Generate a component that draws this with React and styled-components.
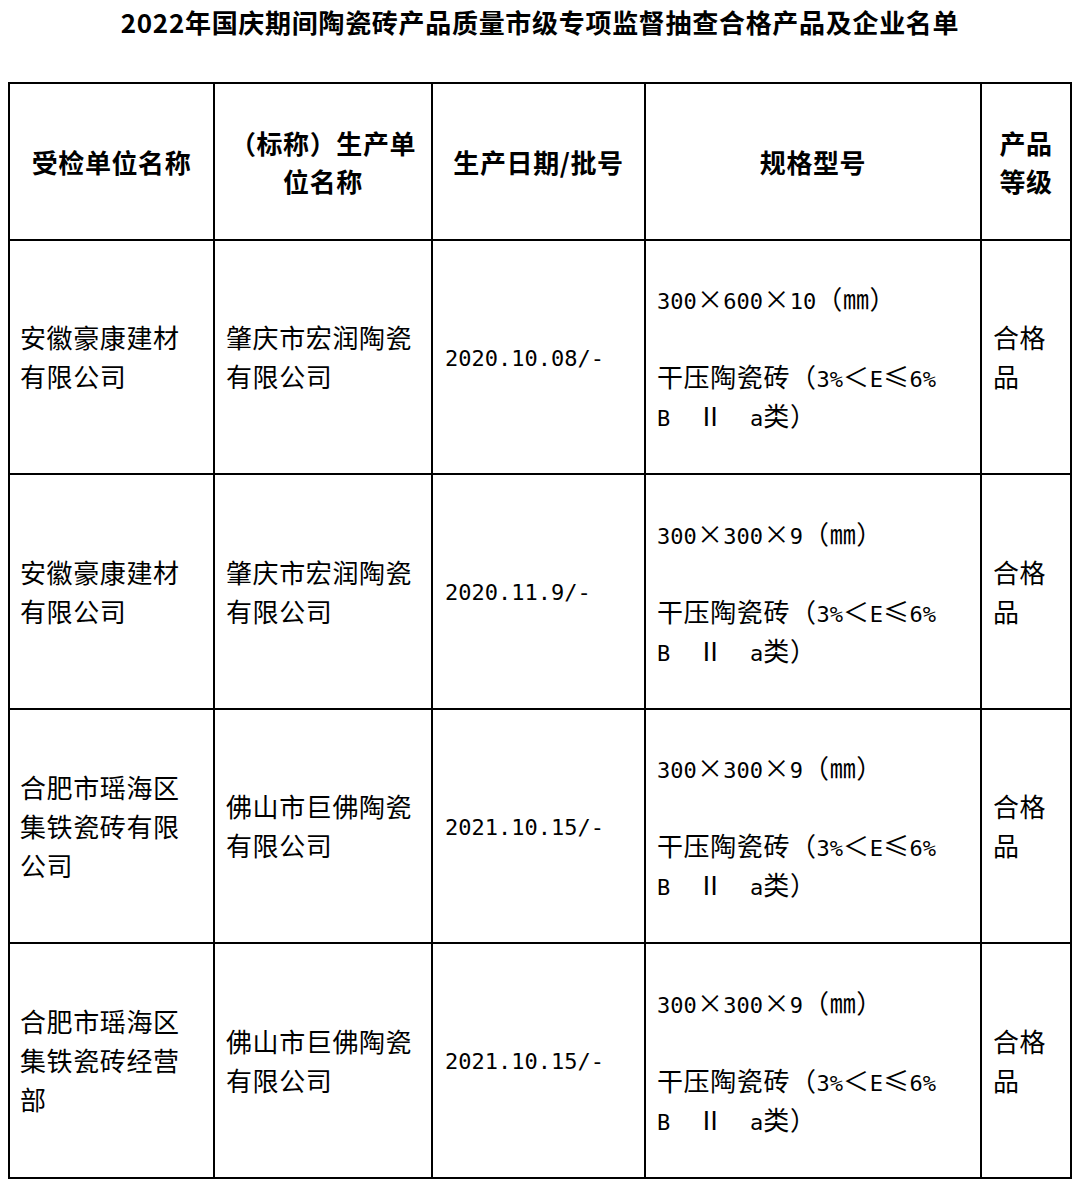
import React from 'react';
import styled, { createGlobalStyle } from 'styled-components';

const GlobalStyle = createGlobalStyle`
  html, body {
    margin: 0;
    padding: 0;
    background: #fff;
  }
  body {
    font-family: "Noto Sans CJK SC", "Noto Sans", sans-serif;
    color: #000;
  }
`;

const Page = styled.div`
  width: 1080px;
  padding: 0 0 8px 8px;
  box-sizing: border-box;
`;

const Title = styled.h1`
  margin: 0;
  height: 44px;
  line-height: 44px;
  padding-right: 8px;
  text-align: center;
  font-size: 26px;
  font-weight: 700;
  letter-spacing: 0.7px;
`;

const Table = styled.table`
  margin-top: 38px;
  width: 1062px;
  border-collapse: collapse;
  table-layout: fixed;
`;

const Row = styled.tr`
  height: ${(p) => p.$h}px;
`;

const HeadCell = styled.th`
  border: 2px solid #000;
  padding: 0 ${(p) => p.$pr ?? 12}px 0 ${(p) => p.$pl ?? 12}px;
  vertical-align: middle;
  text-align: center;
  font-size: 26px;
  font-weight: 700;
  line-height: 38px;
  letter-spacing: 0.6px;
`;

const Cell = styled.td`
  border: 2px solid #000;
  padding: 0 ${(p) => p.$pr ?? 12}px 2px ${(p) => p.$pl ?? 11}px;
  vertical-align: middle;
  text-align: left;
  font-size: 26px;
  font-weight: 400;
  line-height: 39px;
  letter-spacing: 0.6px;
`;

const Line = styled.div`
  height: 39px;
  white-space: nowrap;
`;

const Mono = styled.span`
  font-family: "DejaVu Sans Mono", "Liberation Mono", monospace;
  font-size: 22px;
  letter-spacing: 0;
`;

const Wide = styled.span`
  display: inline-block;
  width: 26.6px;
  text-align: center;
  letter-spacing: 0;
`;

const rows = [
  { unit: '安徽豪康建材有限公司', maker: '肇庆市宏润陶瓷有限公司', date: '2020.10.08/-', size: ['300', '600', '10'] },
  { unit: '安徽豪康建材有限公司', maker: '肇庆市宏润陶瓷有限公司', date: '2020.11.9/-', size: ['300', '300', '9'] },
  { unit: '合肥市瑶海区集铁瓷砖有限公司', maker: '佛山市巨佛陶瓷有限公司', date: '2021.10.15/-', size: ['300', '300', '9'] },
  { unit: '合肥市瑶海区集铁瓷砖经营部', maker: '佛山市巨佛陶瓷有限公司', date: '2021.10.15/-', size: ['300', '300', '9'] },
];

const Spec = ({ size }) => (
  <>
    <Line>
      <Mono>{size[0]}</Mono>
      <Wide>×</Wide>
      <Mono>{size[1]}</Mono>
      <Wide>×</Wide>
      <Mono>{size[2]}</Mono>
      （<Wide>㎜</Wide>）
    </Line>
    <Line />
    <Line>
      干压陶瓷砖（<Mono>3%</Mono>＜<Mono>E</Mono>
      <Wide>≤</Wide>
      <Mono>6%</Mono>
    </Line>
    <Line>
      <Mono>B</Mono>　<Wide>Ⅱ</Wide>　<Mono>a</Mono>类）
    </Line>
  </>
);

export default function App() {
  return (
    <Page>
      <GlobalStyle />
      <Title>2022年国庆期间陶瓷砖产品质量市级专项监督抽查合格产品及企业名单</Title>
      <Table>
        <colgroup>
          <col style={{ width: 205 }} />
          <col style={{ width: 218 }} />
          <col style={{ width: 213 }} />
          <col style={{ width: 336 }} />
          <col style={{ width: 90 }} />
        </colgroup>
        <thead>
          <Row $h={157}>
            <HeadCell>受检单位名称</HeadCell>
            <HeadCell>（标称）生产单位名称</HeadCell>
            <HeadCell>生产日期/批号</HeadCell>
            <HeadCell>规格型号</HeadCell>
            <HeadCell $pl={10} $pr={10}>产品等级</HeadCell>
          </Row>
        </thead>
        <tbody>
          {rows.map((r, i) => (
            <Row key={i} $h={i % 2 ? 235 : 234}>
              <Cell $pl={10} $pr={20}>{r.unit}</Cell>
              <Cell>{r.maker}</Cell>
              <Cell $pl={12}>
                <Mono>{r.date}</Mono>
              </Cell>
              <Cell>
                <Spec size={r.size} />
              </Cell>
              <Cell>合格品</Cell>
            </Row>
          ))}
        </tbody>
      </Table>
    </Page>
  );
}
